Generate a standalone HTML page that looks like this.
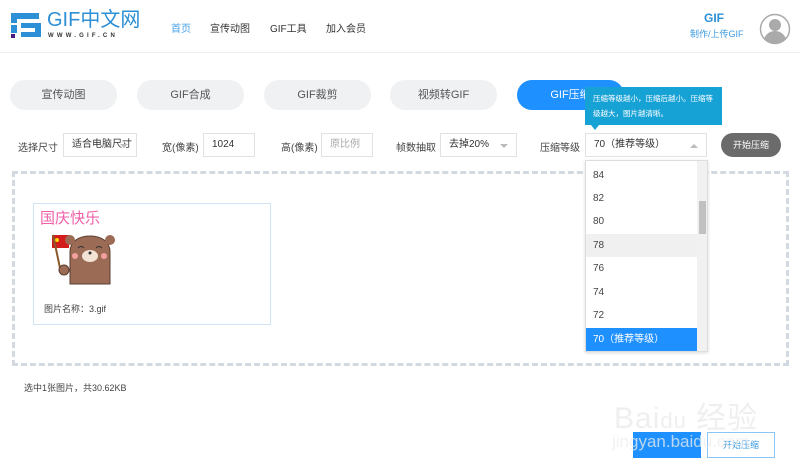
<!DOCTYPE html>
<html><head><meta charset="utf-8"><style>
*{margin:0;padding:0;box-sizing:border-box}
body{width:800px;height:469px;overflow:hidden;background:#fff;font-family:"Liberation Sans","Noto Sans CJK SC",sans-serif;position:relative;color:#333}
.a{position:absolute}
.tab{position:absolute;top:80px;height:30px;width:107px;border-radius:15px;background:#eff1f3;color:#555;font-size:11px;text-align:center;line-height:30px}
.lbl{position:absolute;top:139px;font-size:10px;color:#444}
.inp{position:absolute;top:133px;height:24px;border:1px solid #e2e2e2;font-size:10px;line-height:22px;padding-left:8px;color:#333;background:#fff;white-space:nowrap;overflow:hidden}
.arr{position:absolute;right:8px;top:10px;width:0;height:0;border-left:4px solid transparent;border-right:4px solid transparent;border-top:4px solid #bbb}
.it{position:absolute;left:0;width:112px;height:23px;line-height:23px;padding-left:7px;font-size:10px;color:#444}
</style></head><body>
<div class="a" style="left:0;top:52px;width:800px;height:1px;background:#eee"></div>
<svg class="a" style="left:9px;top:11px" width="34" height="28" viewBox="0 0 34 28">
<path d="M2 2h28v6H8v4h-6z" fill="#2d8fd5"/><path d="M2 14h6v8h-6z" fill="#2d8fd5"/><path d="M12 12h20v14H12v-5h14v-4H12z" fill="#2d8fd5"/><rect x="2" y="23" width="4" height="4" fill="#4b1a7a"/>
</svg>
<div class="a" style="left:47px;top:9px;font-size:20px;color:#2d8fd5;line-height:22px">GIF中文网</div>
<div class="a" style="left:48px;top:33px;font-size:6px;color:#333;letter-spacing:3.2px;font-weight:bold">WWW.GIF.CN</div>
<div class="a" style="left:171px;top:20px;font-size:10px;color:#4aa3e8">首页</div>
<div class="a" style="left:210px;top:20px;font-size:10px;color:#333">宣传动图</div>
<div class="a" style="left:270px;top:20px;font-size:10px;color:#333">GIF工具</div>
<div class="a" style="left:326px;top:20px;font-size:10px;color:#333">加入会员</div>
<div class="a" style="left:704px;top:11px;font-size:12px;font-weight:bold;color:#2d8fd5">GIF</div>
<div class="a" style="left:690px;top:27px;font-size:9px;color:#3a9ae0">制作/上传GIF</div>
<svg class="a" style="left:759px;top:13px" width="32" height="32" viewBox="0 0 32 32"><circle cx="16" cy="16" r="14.5" fill="#fff" stroke="#aaa" stroke-width="1.5"/><circle cx="16" cy="12" r="6" fill="#aaa"/><path d="M5 26c2-6 7-8 11-8s9 2 11 8c-3 3-7 4-11 4s-8-1-11-4z" fill="#aaa"/></svg>
<div class="tab" style="left:10px">宣传动图</div>
<div class="tab" style="left:137px">GIF合成</div>
<div class="tab" style="left:264px">GIF裁剪</div>
<div class="tab" style="left:390px">视频转GIF</div>
<div class="tab" style="left:517px;background:#1e90ff;color:#fff">GIF压缩</div>
<div class="a" style="left:585px;top:87px;width:137px;height:38px;background:#17a2d6;color:#fff;font-size:7.5px;line-height:15px;padding:4px 8px">压缩等级越小，压缩后越小。压缩等级越大，图片越清晰。</div>
<div class="a" style="left:591px;top:125px;border-left:4px solid transparent;border-right:4px solid transparent;border-top:5px solid #17a2d6"></div>
<div class="lbl" style="left:18px">选择尺寸</div>
<div class="inp" style="left:63px;width:74px;padding-right:20px">适合电脑尺寸<span class="arr"></span></div>
<div class="lbl" style="left:162px">宽(像素)</div>
<div class="inp" style="left:203px;width:52px">1024</div>
<div class="lbl" style="left:281px">高(像素)</div>
<div class="inp" style="left:321px;width:52px;color:#aaa">原比例</div>
<div class="lbl" style="left:396px">帧数抽取</div>
<div class="inp" style="left:440px;width:77px">去掉20%<span class="arr"></span></div>
<div class="lbl" style="left:540px">压缩等级</div>
<div class="inp" style="left:585px;width:122px">70（推荐等级）<span class="arr" style="border-top:none;border-bottom:4px solid #bbb"></span></div>
<div class="a" style="left:721px;top:133px;width:60px;height:24px;border-radius:12px;background:#6b6b6b;color:#fff;font-size:9px;text-align:center;line-height:24px">开始压缩</div>
<div class="a" style="left:12px;top:171px;width:777px;height:195px;border:3px dashed #d3d9e0"></div>
<div class="a" style="left:33px;top:203px;width:238px;height:122px;border:1px solid #cfe4f8"></div>
<div class="a" style="left:40px;top:207px;font-size:15px;color:#f05fa8">国庆快乐</div>
<svg class="a" style="left:48px;top:232px" width="70" height="55" viewBox="0 0 70 55">
<rect x="4" y="3" width="17" height="13" fill="#d31c1c"/><circle cx="9" cy="8" r="2" fill="#ffd200"/><line x1="5" y1="3" x2="12" y2="36" stroke="#8a5a2a" stroke-width="2"/>
<path d="M22 52V20c0-10 8-16 20-16s20 6 20 16v32z" fill="#9b6b55" stroke="#5a3d30" stroke-width="1"/>
<circle cx="22" cy="8" r="5" fill="#9b6b55"/><circle cx="62" cy="8" r="5" fill="#9b6b55"/>
<ellipse cx="42" cy="24" rx="8" ry="6" fill="#f2e3d5"/><circle cx="42" cy="21" r="1.5" fill="#333"/>
<circle cx="27" cy="24" r="3" fill="#f4a0a0"/><circle cx="56" cy="24" r="3" fill="#f4a0a0"/>
<path d="M30 16q3-3 6 0M48 16q3-3 6 0" stroke="#333" fill="none"/>
<circle cx="16" cy="38" r="5" fill="#9b6b55" stroke="#5a3d30"/>
</svg>
<div class="a" style="left:44px;top:302px;font-size:9px;color:#444">图片名称：3.gif</div>
<div class="a" style="left:585px;top:160px;width:123px;height:192px;background:#fff;border:1px solid #ddd;box-shadow:0 1px 3px rgba(0,0,0,.15);overflow:hidden">
<div class="it" style="top:3px">84</div>
<div class="it" style="top:26px">82</div>
<div class="it" style="top:49px">80</div>
<div class="it" style="top:73px;background:#f0f0f0">78</div>
<div class="it" style="top:96px">76</div>
<div class="it" style="top:120px">74</div>
<div class="it" style="top:143px">72</div>
<div class="it" style="top:167px;background:#1e90ff;color:#fff">70（推荐等级）</div>
<div class="a" style="left:111px;top:0;width:11px;height:192px;background:#f1f1f1"></div>
<div class="a" style="left:113px;top:40px;width:7px;height:33px;background:#c1c1c1"></div>
</div>
<div class="a" style="left:24px;top:381px;font-size:9px;color:#444">选中1张图片，共30.62KB</div>
<div class="a" style="left:633px;top:432px;width:68px;height:26px;background:#1e90ff"></div>
<div class="a" style="left:707px;top:432px;width:68px;height:26px;border:1px solid #8cc4f5;color:#3a9ae0;font-size:9px;text-align:center;line-height:24px">开始压缩</div>
<div class="a" style="left:614px;top:393px;font-size:30px;color:rgba(235,235,235,.8);letter-spacing:1px">Bai<span style="font-size:22px">du</span> 经验</div>
<div class="a" style="left:612px;top:432px;font-size:17px;color:rgba(238,238,238,.75)">jingyan.baidu.com</div>
</body></html>
